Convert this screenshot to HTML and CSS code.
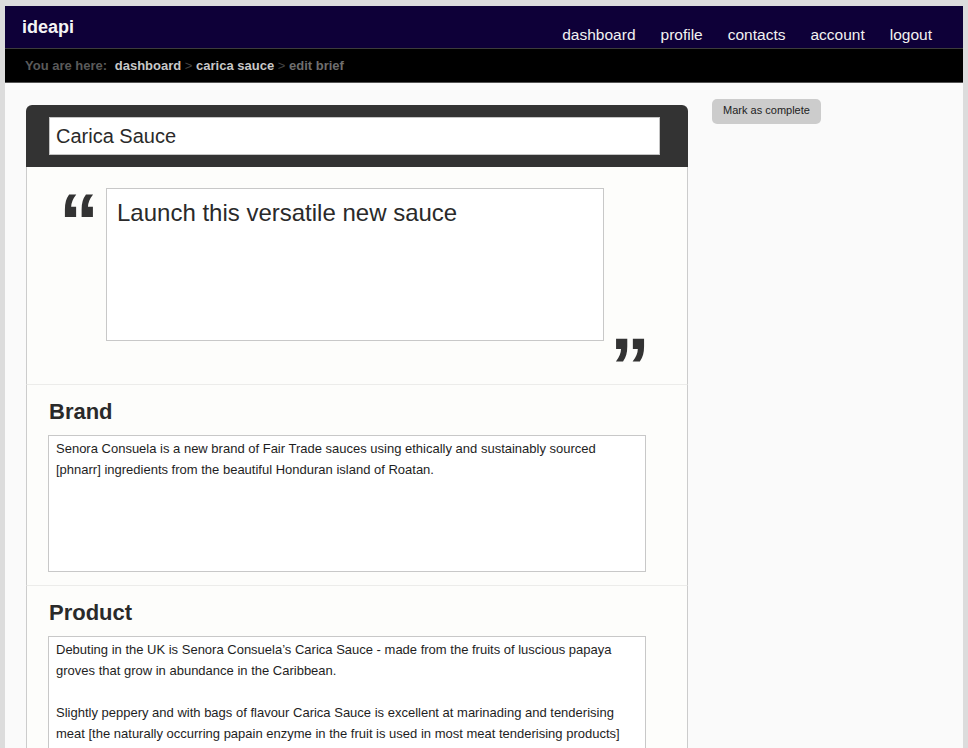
FILE: index.html
```html
<!DOCTYPE html>
<html>
<head>
<meta charset="utf-8">
<title>ideapi - edit brief</title>
<link rel="stylesheet" href="styles.css">
</head>
<body>
<div class="window">
  <header class="topbar">
    <div class="logo">ideapi</div>
    <nav class="nav">
      <a href="#">dashboard</a>
      <a href="#">profile</a>
      <a href="#">contacts</a>
      <a href="#">account</a>
      <a href="#">logout</a>
    </nav>
  </header>
  <div class="crumbs">
    <span class="crumb-label">You are here:</span>
    <a href="#" class="crumb-link">dashboard</a>
    <span class="crumb-sep">&gt;</span>
    <a href="#" class="crumb-link">carica sauce</a>
    <span class="crumb-sep">&gt;</span>
    <span class="crumb-current">edit brief</span>
  </div>
  <main class="main">
    <section class="card">
      <div class="card-head">
        <div class="title-input">Carica Sauce</div>
      </div>
      <div class="quote-row">
        <span class="quote open">&#8220;</span>
        <div class="quote-box">Launch this versatile new sauce</div>
        <span class="quote close">&#8221;</span>
      </div>
      <div class="field">
        <h2 class="field-title">Brand</h2>
        <div class="textbox brand-box">Senora Consuela is a new brand of Fair Trade sauces using ethically and sustainably sourced<br>[phnarr] ingredients from the beautiful Honduran island of Roatan.</div>
      </div>
      <div class="field">
        <h2 class="field-title">Product</h2>
        <div class="textbox product-box">Debuting in the UK is Senora Consuela’s Carica Sauce - made from the fruits of luscious papaya<br>groves that grow in abundance in the Caribbean.<br><br>Slightly peppery and with bags of flavour Carica Sauce is excellent at marinading and tenderising<br>meat [the naturally occurring papain enzyme in the fruit is used in most meat tenderising products]</div>
      </div>
    </section>
    <aside class="side">
      <button class="btn-complete">Mark as complete</button>
    </aside>
  </main>
</div>
</body>
</html>
```
FILE: styles.css
```css
html, body {
  margin: 0;
  padding: 0;
  height: 100%;
  overflow: hidden;
}
body {
  background: #dcdcdc;
  font-family: "Liberation Sans", Arial, Helvetica, sans-serif;
}
.window {
  margin: 6px 5px 0 5px;
  background: #fafafa;
  height: 742px;
  overflow: hidden;
}
.topbar {
  height: 42px;
  background: #0e0038;
  border-bottom: 1px solid #3c3c3c;
  display: flex;
  justify-content: space-between;
  align-items: flex-start;
}
.logo {
  color: #f4f4f4;
  font-weight: bold;
  font-size: 18px;
  line-height: 22px;
  padding: 10px 0 0 17px;
}
.nav {
  display: flex;
  gap: 25px;
  padding: 20px 31px 0 0;
}
.nav a {
  color: #f2f2f2;
  text-decoration: none;
  font-size: 15.5px;
  line-height: 18px;
}
.crumbs {
  height: 33px;
  line-height: 33px;
  background: #000;
  border-bottom: 1px solid #555;
  padding-left: 20px;
  font-size: 13px;
  font-weight: bold;
  white-space: nowrap;
}
.crumb-label {
  color: #5a5a5a;
  margin-right: 4px;
}
.crumb-link {
  color: #c8c8c8;
  text-decoration: none;
}
.crumb-sep {
  color: #444;
  font-weight: normal;
}
.crumb-current {
  color: #6e6e6e;
}
.main {
  display: flex;
  align-items: flex-start;
  padding: 16px 0 0 21px;
}
.card {
  width: 662px;
  margin-top: 6px;
  flex: none;
}
.card-head {
  background: #333;
  border-radius: 6px 6px 0 0;
  padding: 12px 28px 12px 23px;
}
.title-input {
  height: 36px;
  line-height: 36px;
  background: #fff;
  border: 1px solid #c4c4c4;
  padding-left: 6px;
  font-size: 20px;
  color: #2a2a2a;
}
.quote-row,
.field {
  background: #fdfdfb;
  border-left: 1px solid #ccc;
  border-right: 1px solid #ccc;
}
.quote-row {
  display: flex;
  align-items: flex-start;
  padding: 21px 0 43px 32px;
}
.quote {
  font-family: "Liberation Sans", Arial, sans-serif;
  font-weight: bold;
  font-size: 80px;
  line-height: 80px;
  color: #333;
}
.quote.open {
  width: 47px;
  flex: none;
  margin-top: -6px;
}
.quote.close {
  align-self: flex-end;
  margin: 0 0 -66px 6px;
}
.quote-box {
  width: 476px;
  height: 151px;
  border: 1px solid #c8c8c8;
  background: #fff;
  padding: 0 10px;
  font-size: 24px;
  line-height: 47px;
  color: #2a2a2a;
  flex: none;
}
.field {
  border-top: 1px solid #ececea;
  padding: 14px 0 13px 21px;
}
.field-title {
  margin: 0 0 10px 1px;
  font-size: 22px;
  line-height: 26px;
  font-weight: bold;
  color: #2a2a2a;
}
.textbox {
  width: 582px;
  border: 1px solid #c8c8c8;
  background: #fff;
  padding: 2px 7px 6px;
  font-size: 13px;
  line-height: 21px;
  color: #1e1e1e;
  white-space: nowrap;
}
.brand-box {
  height: 127px;
}
.product-box {
  min-height: 200px;
}
.side {
  margin-left: 24px;
}
.btn-complete {
  background: #ccc;
  border: none;
  border-radius: 5px;
  height: 25px;
  width: 109px;
  padding: 0 0 3px;
  font-family: "Liberation Sans", Arial, sans-serif;
  font-size: 11px;
  color: #222;
  cursor: pointer;
}
```
